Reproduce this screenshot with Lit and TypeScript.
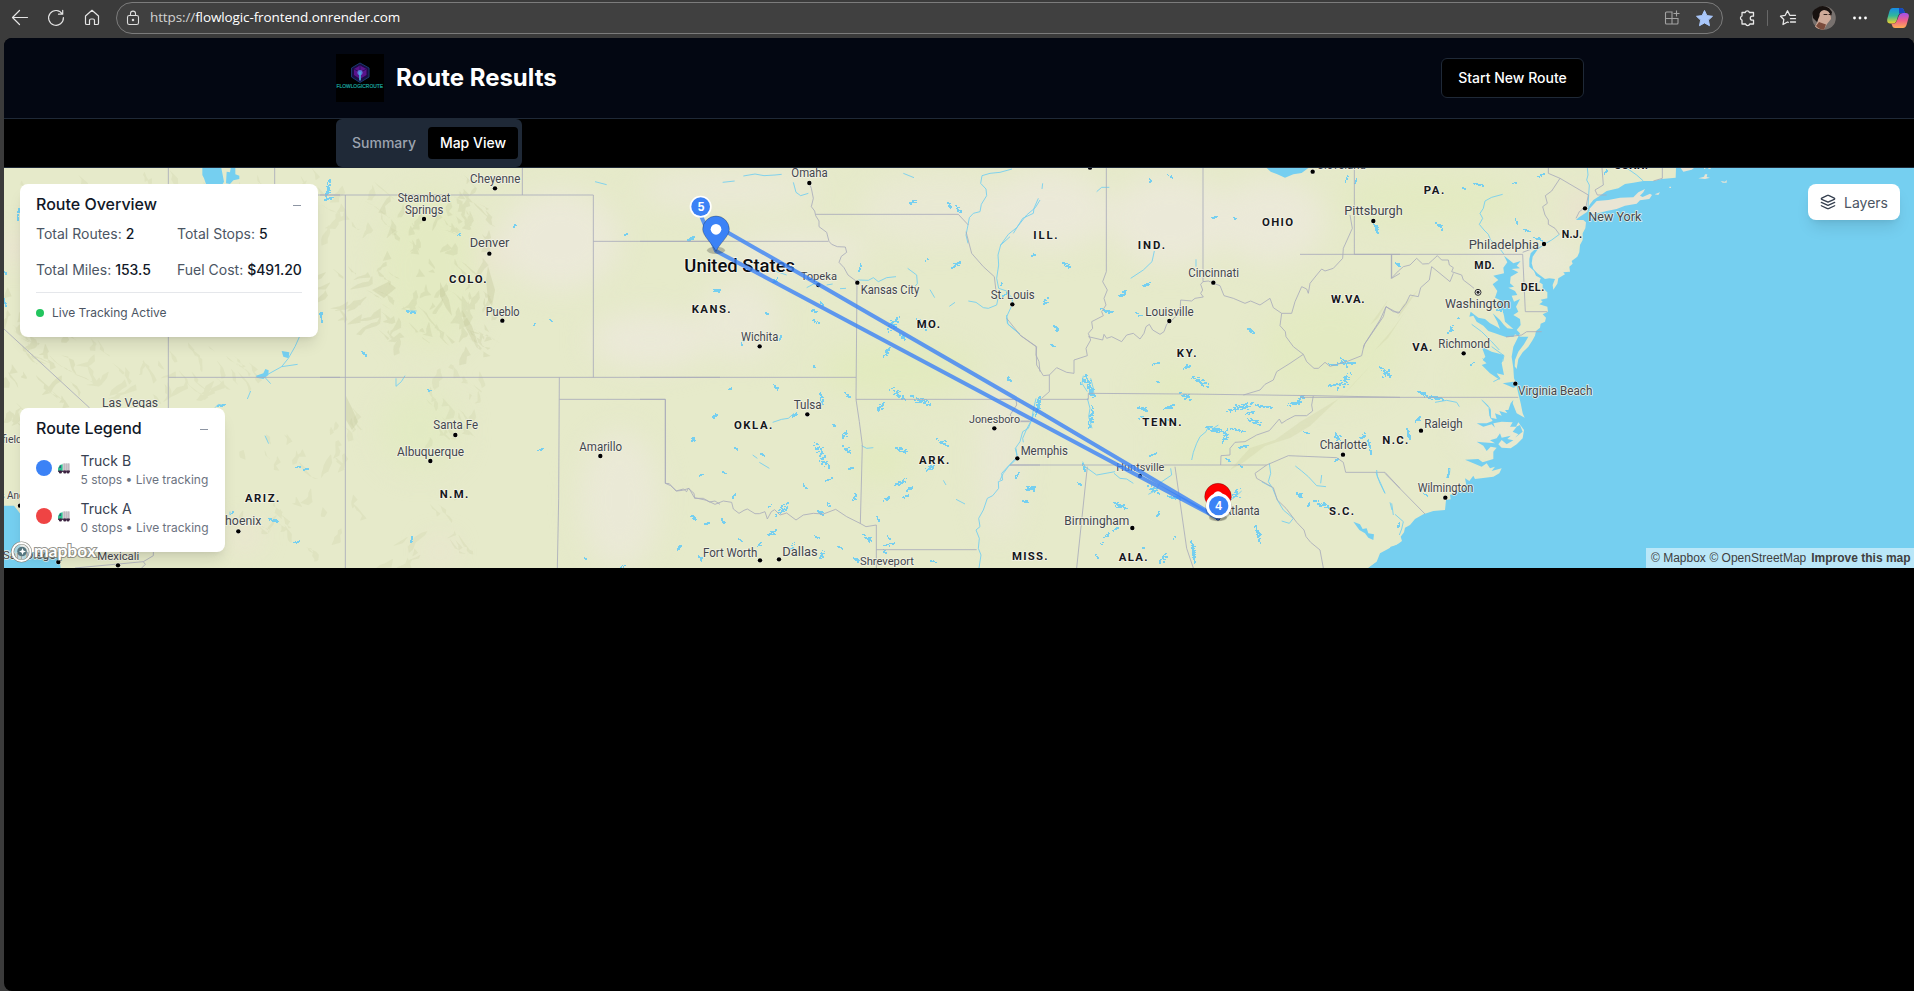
import { LitElement, html, css, svg } from "lit";
import { customElement } from "lit/decorators.js";

type Label = [string, number, number, number, number];
type Box = [number, number, number, number];

interface Sheet {
  ox: number;
  borders: string[];
  rivers: string[];
  water: string[];
  lakes: Box[];
  cities: Label[];
  states: Label[];
  dots: [number, number][];
}

/* Every sheet is drafted at three units per pixel, starting at ox from the left edge. */
const sheets: Sheet[] = [
  {
    ox: 0,
    borders: [
      "M505 9V1000M505 637H1020M824 9V90H1020M12 492L268 728L330 790",
      "M225 1209L430 1190L460 1172V1150M430 1190L436 1198L425 1209",
    ],
    rivers: [
      "M898 516L885 545L865 580L845 605L800 630M845 605L893 598M790 632L812 656",
      "M752 678L742 702M645 728L655 718L675 722M795 812L806 836M690 1040V1050M1005 1060",
    ],
    water: [
      "M607 9H664L672 50L668 57H618L612 40L607 30Z",
      "M680 20L690 22L692 9H706V28L718 32V42L700 46L690 57L678 55Z",
      "M12 1022H42L62 1048L68 1100L90 1130L150 1165L178 1180L182 1209H12Z",
      "M768 632L790 625L796 612L806 616L805 630L790 642L770 638Z",
      "M845 558L868 562L866 580L850 575Z",
    ],
    lakes: [[50, 130, 8, 34], [12, 398, 6, 26], [11, 318, 7, 8], [975, 42, 14, 60], [972, 96, 28, 10], [958, 440, 10, 35], [885, 902, 16, 6], [908, 908, 16, 8], [805, 1058, 30, 14], [880, 1126, 20, 8], [690, 1038, 9, 12], [650, 716, 26, 8]],
    cities: [
      ["Las Vegas", 306, 474, 727, 34],
      ["Bakersfield", -90, 66, 833, 33],
      ["Los Angeles", -35, 128, 1002, 33],
      ["Phoenix", 652, 784, 1080, 34],
      ["San Diego", 8, 168, 1182, 33],
      ["Mexicali", 292, 418, 1184, 33],
    ],
    states: [["ARIZ.", 735, 838, 1010, 31]],
    dots: [[60, 1022], [715, 1099], [175, 1191], [354, 1201]],
  },
  {
    ox: 320,
    borders: [
      "M0 90H820V637M607 9V90M76 90V1209M820 229H1200M0 637H1200",
      "M718 637L716 1000L712 1209M718 703H1036V955L1048 956L1068 978L1090 972L1100 980L1105 970L1122 985L1124 1000H1150L1168 1011L1185 1008L1200 1018",
    ],
    rivers: ["M825 50L860 59", "M228 640V664L244 650L255 632", "M262 438L290 438"],
    water: [],
    lakes: [[580, 178, 8, 8], [410, 203, 14, 12], [258, 434, 30, 12], [640, 474, 8, 8], [688, 463, 8, 8], [124, 558, 14, 14], [322, 672, 10, 8], [650, 850, 20, 7], [1102, 214, 20, 13], [912, 205, 12, 5], [1178, 372, 22, 8], [1177, 745, 12, 14], [1112, 815, 12, 16], [1138, 925, 9, 9], [1112, 1050, 16, 16], [1153, 1070, 14, 8], [1072, 1140, 10, 15], [1133, 1175, 12, 12], [792, 1176, 7, 7], [900, 1200, 15, 8], [271, 1113, 7, 22], [0, 440, 8, 14]],
    cities: [
      ["Cheyenne", 450, 601, 53, 34],
      ["Steamboat", 233, 391, 110, 34],
      ["Springs", 255, 370, 147, 34],
      ["Denver", 449, 568, 247, 37],
      ["Pueblo", 497, 599, 452, 34],
      ["Santa Fe", 340, 474, 793, 34],
      ["Albuquerque", 231, 432, 872, 34],
      ["Amarillo", 778, 906, 858, 34],
    ],
    states: [["COLO.", 387, 500, 353, 31], ["N.M.", 359, 445, 998, 31]],
    dots: [[525, 70], [312, 162], [508, 266], [547, 467], [406, 810], [331, 888], [841, 873]],
  },
  {
    ox: 640,
    borders: [
      "M0 229H565M0 637H648M0 703H76V955L92 962L110 978L128 976L147 970L163 998L200 1006L225 1018L250 1008L275 1012L280 1032L297 1045L312 1036L322 1032L345 1046L358 1046L375 1040L382 1062L394 1040L404 1034L420 1050L440 1044L468 1065L490 1050L520 1045L550 1047L587 1033L620 1055L660 1075L678 1085L709 1080V1209M709 1154H1010",
      "M661 1075L664 960L667 840L658 770L648 703L651 350M648 703H1128",
      "M508 54L514 70L520 100L514 125L524 138L527 152L537 168V185L560 202L567 229L575 238L592 245L616 246L620 262L604 274L597 292L612 308L624 330L640 342L651 350",
      "M527 148H955L985 180M978 200L995 265L1030 305L1063 335L1068 378M1110 900H1200M1128 703L1130 720L1110 750L1130 768H1168",
      "M1140 510L1190 545L1188 570L1197 590L1200 620",
    ],
    rivers: [
      "M1116 12L1080 22L1050 25L1026 32L1022 55L1038 72L1040 92L1024 118L1020 140L1000 145L988 158L984 180L978 210L984 235",
      "M1200 105L1186 128L1160 150L1130 188L1105 208L1082 240L1074 270L1076 300L1070 340L1076 370L1100 378L1117 400L1117 418L1100 455L1104 478L1140 508",
      "M248 52L284 48M310 33L345 27L372 32L405 30L425 28M460 52L468 82L482 92L505 85M655 345L685 346L700 338L715 350L740 338L768 335M803 310L830 330L832 356L825 364M870 374L884 398M928 424L945 412M985 408L1008 412L1030 428L1045 430L1070 420L1074 400M790 25L822 38",
      "M1182 745L1165 790L1148 800L1140 830L1126 850L1132 875L1108 900L1085 925L1088 945L1075 950L1076 970L1058 992L1042 1000L1030 1035L1016 1060L1020 1085L1008 1095L1018 1120L1015 1150L1023 1170L1017 1209",
      "M398 772L425 763L445 760L462 745M665 842L680 850L700 848M338 870L352 880M358 892L388 910M500 368L530 352M560 360L578 357M600 371L618 370M405 318L440 330M918 960L910 946M948 1003L975 1017",
    ],
    water: [],
    lakes: [[142, 215, 20, 11], [218, 372, 22, 8], [395, 337, 18, 17], [375, 440, 11, 11], [418, 510, 5, 14], [302, 525, 10, 14], [512, 432, 20, 10], [515, 463, 25, 12], [540, 408, 10, 12], [519, 600, 7, 8], [400, 657, 16, 18], [263, 667, 12, 8], [612, 682, 18, 18], [538, 682, 14, 38], [455, 740, 16, 20], [217, 747, 14, 10], [153, 815, 12, 15], [283, 846, 10, 8], [360, 865, 14, 8], [247, 916, 11, 11], [178, 927, 10, 8], [275, 985, 12, 14], [520, 832, 35, 45], [530, 870, 38, 40], [603, 795, 18, 25], [605, 840, 28, 25], [577, 778, 8, 6], [625, 905, 14, 6], [554, 937, 22, 12], [488, 955, 12, 18], [635, 985, 14, 22], [558, 1012, 12, 15], [405, 1010, 40, 45], [530, 1035, 20, 14], [150, 1050, 18, 16], [195, 1070, 13, 8], [240, 1058, 16, 18], [380, 1092, 30, 20], [295, 1118, 12, 14], [350, 1130, 14, 16], [114, 1140, 8, 14], [175, 1170, 12, 16], [448, 1132, 16, 25], [523, 1110, 18, 10], [535, 1155, 20, 28], [592, 1142, 16, 10], [665, 1108, 32, 24], [708, 1052, 12, 18], [730, 993, 20, 15], [762, 940, 38, 22], [798, 962, 20, 15], [785, 988, 22, 12], [765, 845, 38, 20], [888, 820, 36, 22], [856, 895, 26, 24], [705, 710, 28, 32], [748, 665, 38, 40], [785, 690, 12, 14], [810, 690, 62, 30], [730, 545, 22, 32], [740, 452, 40, 48], [778, 505, 16, 24], [828, 460, 34, 34], [808, 103, 24, 13], [922, 112, 14, 18], [945, 120, 18, 25], [932, 287, 32, 22], [655, 293, 10, 25], [856, 278, 8, 12], [1098, 632, 10, 14], [1185, 692, 14, 60], [1172, 263, 12, 14], [1125, 925, 12, 15], [1158, 960, 28, 20], [1145, 1004, 20, 8], [740, 1110, 10, 12], [728, 1132, 38, 12], [728, 1152, 12, 14], [870, 1185, 20, 8], [640, 1172, 18, 18], [1085, 380, 26, 12], [385, 1018, 10, 10]],
    cities: [
      ["Omaha", 454, 563, 37, 34],
      ["Topeka", 482, 591, 344, 33],
      ["Kansas City", 662, 838, 388, 34],
      ["St. Louis", 1052, 1184, 401, 34],
      ["Wichita", 303, 415, 527, 34],
      ["Tulsa", 461, 545, 731, 34],
      ["Jonesboro", 987, 1140, 775, 33],
      ["Fort Worth", 189, 352, 1176, 34],
      ["Dallas", 427, 533, 1172, 36],
      ["Shreveport", 660, 822, 1200, 33],
    ],
    states: [["KANS.", 155, 272, 443, 31], ["MO.", 830, 900, 489, 31], ["OKLA.", 282, 397, 793, 31], ["ARK.", 837, 928, 898, 31]],
    dots: [[508, 54], [535, 360], [652, 353], [1117, 418], [359, 544], [502, 748], [1063, 790], [360, 1186], [417, 1183]],
  },
  {
    ox: 1000,
    borders: [
      "M319 9V320L308 350L322 375L312 400L318 420L305 440L310 452L275 470L278 490L265 505L272 525L258 550L262 572L222 585L222 625L200 622L170 608L148 630",
      "M20 460L62 512L108 545L110 600L130 632L148 630L148 680L125 700",
      "M265 515L308 525L312 508L320 520L335 515L365 530L380 510L400 505L420 522L432 505L438 485L448 478L458 495L480 508L492 500L500 478L522 460L540 440L542 405L575 408L585 400L610 396L602 385L608 375L602 358L609 350L625 348L640 355L660 362L672 392L700 400L735 415L752 408L780 420L810 400L820 428L845 445L875 445L885 410L905 365L920 372L925 385L930 355L950 330L965 312L975 318L1000 310L1028 280L1030 250L1057 190L1050 150",
      "M609 9V350M1063 9V268H1200M1175 268V340L1200 325",
      "M845 445L840 482L856 500L858 515L880 545L910 568L920 590L942 610H955L975 592L990 604L1040 590L1085 572L1092 540L1150 455L1158 425L1180 440L1200 442",
      "M910 568L870 595L830 620L820 645L795 658L780 675L730 690M120 703H265V685L560 687L940 692L1200 697",
      "M940 692L935 720L938 738L920 752L885 752L860 765L845 775L838 762L808 797L770 810L735 830L705 832L690 850V870L663 872L662 900M30 900H800L865 872L1010 878L1030 892L1037 922H1155L1200 970",
      "M800 900L765 925L770 940L820 968L832 1005L858 1030L890 1072L912 1095L918 1115L932 1132L960 1155L970 1209M262 905L230 1209M525 905L560 1150L580 1209M0 703H40M60 770H90",
    ],
    rivers: [
      "M115 100L102 130L100 145L68 160L40 205M30 215L0 242M128 55L126 72M290 80L305 67H328M463 258L456 290L430 315L392 340M588 283V305M20 450L22 475L60 508M108 700L100 735L95 765L80 792L68 820L70 832M48 850L52 880L25 905L10 925L0 945",
      "M575 885L580 862L590 835L600 815L618 800L625 785L640 790L655 780M512 910L515 930L478 955L470 975L445 988",
      "M808 895L812 925L805 950L818 970L832 1005L850 1035L880 1060L868 1075L845 1068M785 950L812 965M886 903L905 918L925 935L950 962L978 965M965 930L962 955M1128 922L1140 955L1155 985M1175 1015L1180 1050M342 925L360 940L380 942L400 955M248 890L255 905L290 930L345 920M650 985L700 1000L725 978",
      "M262 700L270 730L266 755L276 790M250 632L246 655L262 680M272 640L280 670L282 692",
    ],
    water: [
      "M800 9H925L905 24L880 28L855 38L832 28L812 20Z",
      "M1105 1209L1130 1190L1140 1165L1168 1150L1200 1135V1209Z",
      "M1060 1070L1080 1078L1088 1092L1100 1090L1105 1105L1122 1108L1120 1125L1105 1118L1095 1105L1078 1095Z",
    ],
    lakes: [[240, 630, 20, 30], [255, 628, 20, 64], [262, 660, 22, 40], [264, 720, 16, 70], [632, 152, 18, 8], [700, 156, 12, 7], [92, 265, 12, 10], [187, 290, 24, 20], [128, 397, 16, 20], [425, 352, 24, 14], [355, 385, 20, 9], [365, 376, 14, 4], [405, 442, 20, 12], [300, 430, 40, 14], [160, 480, 16, 20], [150, 538, 16, 8], [20, 635, 12, 12], [740, 488, 22, 20], [455, 590, 22, 9], [550, 596, 20, 16], [572, 632, 54, 34], [468, 647, 12, 8], [538, 680, 36, 26], [490, 715, 32, 20], [412, 722, 32, 16], [415, 752, 14, 12], [502, 762, 22, 14], [678, 710, 84, 30], [765, 718, 50, 12], [742, 758, 40, 22], [735, 738, 28, 12], [615, 782, 60, 22], [665, 790, 20, 44], [690, 788, 44, 12], [715, 840, 30, 9], [675, 878, 16, 14], [448, 862, 24, 11], [714, 895, 12, 12], [860, 705, 44, 18], [910, 798, 18, 9], [895, 685, 20, 18], [985, 590, 80, 10], [1020, 575, 20, 30], [1010, 620, 45, 54], [985, 655, 35, 8], [1142, 605, 30, 32], [1078, 802, 20, 20], [1000, 800, 28, 34], [1102, 822, 12, 48], [1003, 878, 14, 12], [245, 895, 10, 24], [232, 950, 12, 10], [75, 962, 34, 14], [65, 1005, 22, 8], [44, 922, 12, 16], [338, 1012, 44, 20], [468, 1038, 11, 18], [518, 1114, 10, 10], [310, 1100, 16, 20], [300, 1130, 10, 10], [478, 1165, 26, 30], [570, 1125, 16, 70], [762, 1080, 22, 54], [425, 1145, 8, 8], [285, 1168, 8, 10], [888, 980, 18, 20], [940, 1005, 46, 24], [920, 1010, 10, 12], [502, 990, 40, 14], [440, 960, 40, 28], [502, 28, 16, 10], [446, 38, 6, 12], [336, 1085, 18, 12], [1185, 290, 15, 16], [0, 352, 8, 12], [1035, 30, 8, 20], [1063, 40, 8, 18], [1120, 170, 14, 34], [690, 970, 34, 36], [1190, 1070, 10, 20]],
    cities: [
      ["Cleveland", 950, 1098, 12, 34],
      ["Pittsburgh", 1033, 1208, 150, 37],
      ["Cincinnati", 565, 717, 336, 34],
      ["Louisville", 436, 581, 452, 34],
      ["Memphis", 62, 204, 870, 34],
      ["Huntsville", 349, 493, 918, 33],
      ["Charlotte", 959, 1102, 852, 34],
      ["Atlanta", 672, 779, 1049, 35],
      ["Birmingham", 193, 388, 1080, 34],
    ],
    states: [
      ["ILL.", 100, 173, 221, 31], ["IND.", 413, 495, 252, 31], ["OHIO", 786, 879, 183, 31],
      ["W.VA.", 993, 1094, 414, 31], ["KY.", 530, 590, 577, 31], ["TENN.", 427, 545, 782, 31],
      ["S.C.", 987, 1062, 1049, 31], ["MISS.", 36, 143, 1184, 31], ["ALA.", 356, 443, 1188, 31],
    ],
    dots: [[270, 8], [938, 20], [1120, 168], [640, 353], [508, 468], [52, 880], [420, 933], [1029, 869], [397, 1089], [654, 1060]],
  },
];

const coast =
  "M1128 9L1127 38L1085 42L1062 48H1030L1000 53L975 57L955 70L920 78L895 95L880 105L870 118L864 130L862 140L835 158L828 165L850 165L858 172L856 190L848 205L848 225L840 240L838 262L832 275L815 288L818 296L808 305L810 320L790 322L795 328L775 340L772 356L760 374L758 360L765 342L748 340L735 342L722 332L712 325L700 312L695 295L698 275L712 255L732 240L708 250L692 265L688 282V305L702 318L708 332L722 340L718 352L728 358L728 370L742 382V400L722 404L728 410L718 418L742 425L744 440L728 448L738 458L735 470L722 476L720 488L708 498L705 512L698 525L685 545L668 562L655 582L650 612L644 604L645 585L655 560L672 538L685 515L662 515L645 508L640 516L618 516L600 510L585 505L565 498L550 482L530 470L520 452L508 455L512 440L535 458L555 462L570 475L590 485L600 492L592 470L578 445L600 465L612 480L622 490L640 492L615 470L612 452L605 425L588 418L600 405L585 398L592 378L578 358L595 345L580 332L612 325L610 308L622 292L612 272L628 285L640 295L662 288L650 302L660 310L635 312L655 322L632 335L630 355L642 365L625 368L645 378L652 390L635 392L642 410L660 402L648 425L655 440L640 450L660 462L662 480L650 495L660 505L640 545L635 575L640 610L642 640L648 655L656 690L662 715L668 745L674 758L650 745L638 715L640 705L632 715L625 735L615 735L622 745L598 738L605 752L585 745L590 762L572 758V735L545 703L565 722L568 752L578 768L560 775H530L550 785L575 778L585 788L580 775L605 770L638 772L630 785H650L638 800L655 808L645 818L668 800L660 780L648 785L655 772L672 795L668 820L650 838L632 850L605 848L595 838L605 825L620 838L640 826L622 822L632 812L605 818L600 805L590 820L570 826L585 835L545 832L530 830L550 842L560 858L572 845L590 848L580 860V882L548 892L535 882L495 884L520 895L545 905L560 895L570 910L585 905L575 918L605 910L598 925L580 935L525 942L520 932L508 948L495 940L500 965L475 978L450 990L452 1003L438 1005L435 1035L400 1038L370 1048L345 1062L330 1080L315 1088L312 1102L302 1115L306 1128L290 1140L272 1145L262 1160L245 1170L240 1185L225 1195L205 1209H1842V9Z";

const east: Sheet = {
  ox: 1300,
  borders: [
    "M274 268V340L295 318L310 305L330 300L350 280L368 297L386 296L398 285L412 272L425 285L445 285L448 300L460 308L455 320L485 330L490 345L510 360L522 370M460 325L450 350L395 305L388 345L362 368L355 395L330 390L318 415L295 445L258 425L240 465L195 535L190 550",
    "M0 268H668L676 440H742M668 262L700 250M778 208L765 190L745 178V165L735 150L728 125L742 115L736 92L755 78L780 40L745 25V9M780 40L865 90L858 125L838 140L828 160M618 516L665 510L680 500L725 500M0 697H655M255 925L375 1047M906 9L910 60L885 75L892 90H920M1087 9V40L1060 48",
  ],
  rivers: [
    "M862 9L864 30L860 45L868 60L866 90L864 128M608 88L575 97L555 108L550 130L540 145L548 160L538 178L552 195L565 208L572 225L595 245L612 268M778 208L755 225L732 238M515 478L545 500L575 530L598 555M575 545L612 572L608 590M548 580L575 610L600 640L580 650M545 705L570 730L572 760M230 915L232 935L242 955L255 985M270 1012L276 1035M285 1048L310 1070L305 1092L298 1110M450 910L448 930L438 938M980 9L1010 30L1030 48M405 712L440 706L470 712L478 725",
  ],
  water: ["M545 545L575 560L612 570L605 595L612 630L590 625L600 645L570 625L545 600L560 595L548 585L556 575Z", "M608 655L640 650L648 665L640 668Z"],
  lakes: [[487, 66, 12, 6], [520, 54, 30, 9], [635, 50, 14, 8], [645, 160, 8, 16], [405, 170, 24, 24], [670, 190, 20, 10], [712, 25, 20, 12], [285, 290, 14, 12], [442, 480, 18, 26], [470, 455, 8, 8], [510, 592, 12, 8], [236, 604, 8, 6], [245, 612, 26, 28], [352, 676, 28, 16], [368, 686, 60, 22], [345, 752, 18, 20], [316, 790, 15, 34], [440, 908, 8, 30], [370, 985, 14, 8], [912, 12, 8, 16], [700, 215, 30, 12], [580, 415, 34, 30], [600, 380, 20, 30]],
  cities: [
    ["Philadelphia", 506, 717, 251, 38],
    ["New York", 865, 1024, 167, 37],
    ["Washington", 435, 631, 428, 37],
    ["Richmond", 415, 570, 548, 34],
    ["Virginia Beach", 654, 877, 690, 34],
    ["Raleigh", 373, 488, 788, 34],
    ["Wilmington", 353, 520, 982, 34],
  ],
  states: [
    ["PA.", 371, 433, 88, 31], ["N.J.", 785, 846, 219, 29], ["MD.", 523, 584, 311, 29], ["DEL.", 662, 733, 378, 29],
    ["VA.", 337, 397, 557, 31], ["N.C.", 247, 325, 838, 31], ["CONN.", 942, 1044, 12, 31],
  ],
  dots: [[732, 237], [855, 130], [491, 565], [646, 656], [363, 797], [436, 998]],
};

const islands =
  "M868 132L890 108L925 105L960 98L1000 97L1015 82L1035 72L1030 82L1020 92L1028 96L1050 86L1056 90L1048 102L1020 106L1010 116L975 122L950 132L920 138L888 146L870 148Z M1064 88L1080 82L1075 90Z M1195 40L1212 35L1215 28H1222L1220 36L1230 38L1215 42Z M1262 48L1275 50L1280 45V53H1268Z M1142 9H1182L1175 14L1150 20Z M1212 9H1216V12H1212Z M1225 9H1232V12H1225Z M1108 65H1113V69H1108Z";

/* Rows of small squares wander diagonally through the box, like a reservoir seen from far off. */
function reservoir([x, y, w, h]: Box): string {
  let seed = (x * 73 + y * 151 + w * 17) % 9973;
  const rnd = () => {
    seed = (seed * 421 + 1663) % 9973;
    return seed / 9973;
  };
  const n = Math.max(4, Math.round(Math.max(w, h) / 3));
  const rising = rnd() > 0.45;
  let d = "";
  for (let i = 0; i < n; i++) {
    const t = i / (n - 1);
    const major = w >= h;
    const spread = (rnd() - 0.5) * 0.65;
    const tx = major ? t : Math.min(1, Math.max(0, (rising ? 1 - t : t) + spread));
    const ty = major ? Math.min(1, Math.max(0, (rising ? 1 - t : t) + spread)) : t;
    const px = Math.round((x + tx * Math.max(0, w - 3)) / 3) * 3;
    const py = Math.round((y + ty * Math.max(0, h - 3)) / 3) * 3;
    const rw = rnd() > 0.45 ? 6 : 3;
    const rh = rnd() > 0.5 ? 6 : 3;
    d += `M${px} ${py}h${rw}v${rh}h-${rw}z`;
    if (Math.min(w, h) > 12) {
      const qx = Math.round((x + (w * 0.5 + (tx * w - w * 0.5) * 0.5)) / 3) * 3;
      const qy = Math.round((y + (h * 0.5 + (rnd() - 0.5) * h * 0.5)) / 3) * 3;
      d += `M${qx} ${qy}h6v3h-6z`;
    }
  }
  return d;
}

function relief(x0: number, y0: number, x1: number, y1: number, count: number, lean: number, seed0: number): string {
  let seed = seed0;
  const rnd = () => {
    seed = (seed * 421 + 1663) % 9973;
    return seed / 9973;
  };
  let d = "";
  for (let i = 0; i < count; i++) {
    let x = x0 + rnd() * (x1 - x0);
    let y = y0 + rnd() * (y1 - y0);
    const side = rnd() > 0.5 ? 1 : -0.6;
    const top: string[] = [];
    const back: string[] = [];
    const steps = 2 + Math.floor(rnd() * 4);
    for (let k = 0; k <= steps; k++) {
      const thick = k === 0 || k === steps ? 0.5 : 2 + rnd() * 5;
      top.push(`${x.toFixed(1)} ${y.toFixed(1)}`);
      back.unshift(`${(x + thick).toFixed(1)} ${(y + thick * 0.6).toFixed(1)}`);
      x += (lean * 4 + (rnd() - 0.5) * 9) * side;
      y += 1 + rnd() * 5;
    }
    d += `M${top.join("L")}L${back.join("L")}Z`;
  }
  return d;
}

@customElement("route-map")
class RouteMap extends LitElement {
  static styles = css`
    :host { display: block; }
    svg { display: block; width: 100%; height: 100%; }
    text { font-family: "Roboto", "Liberation Sans", sans-serif; }
    .border { fill: none; stroke: #a9abbb; stroke-width: 2.8; stroke-opacity: .9; }
    .river { fill: none; stroke: #75cff0; stroke-width: 3; stroke-opacity: .9; }
    .water { fill: #75cff0; }
    .city { fill: #43464c; paint-order: stroke; stroke: #f4f4e8; stroke-opacity: .85; stroke-width: 5; stroke-linejoin: round; }
    .state { fill: #17181c; font-weight: 700; paint-order: stroke; stroke: #f7f7ee; stroke-opacity: .85; stroke-width: 5; stroke-linejoin: round; }
    .country { fill: #0c0d10; font-weight: 500; paint-order: stroke; stroke: #f7f7ee; stroke-width: 5; }
    .dot { fill: #000; stroke: #fff; stroke-width: 3; stroke-opacity: .7; paint-order: stroke; }
    .line { fill: none; stroke: #3b82f6; stroke-opacity: .8; stroke-width: 12; stroke-linejoin: round; stroke-linecap: round; }
    .num { fill: #fff; font-family: "Liberation Sans", sans-serif; font-weight: 700; font-size: 36px; text-anchor: middle; }
    .soft { filter: blur(14px); }
    .ridge { filter: blur(.7px); }
  `;

  private terrain(s: Sheet) {
    return svg`<g transform="translate(${s.ox} 165) scale(.33333333)">
      ${s.rivers.map((d) => svg`<path class="river" d=${d}></path>`)}
      ${s.water.map((d) => svg`<path class="water" d=${d}></path>`)}
      <path class="water" shape-rendering="crispEdges" d=${s.lakes.map(reservoir).join("")}></path>
      ${s.borders.map((d) => svg`<path class="border" d=${d}></path>`)}
    </g>`;
  }

  private names(s: Sheet) {
    return svg`<g transform="translate(${s.ox} 165) scale(.33333333)">
      ${s.cities.map(([t, a, b, y, size]) => svg`<text class="city" x=${a} y=${y} font-size=${size * 1.06} textLength=${b - a} lengthAdjust="spacingAndGlyphs">${t}</text>`)}
      ${s.states.map(([t, a, b, y, size]) => svg`<text class="state" x=${a} y=${y} font-size=${size * 1.1} textLength=${b - a}>${t}</text>`)}
      ${s.dots.map(([x, y]) => svg`<circle class="dot" cx=${x} cy=${y} r="6.6"></circle>`)}
    </g>`;
  }

  private pin(x: number, y: number, color: string, hole: boolean) {
    return svg`<g transform="translate(${x} ${y})">
      <ellipse cx="0" cy="-3" rx="27" ry="11" fill="#000" opacity=".22"></ellipse>
      <path d="M0 0C-10 -22 -40 -46 -40 -66A40 40 0 0 1 40 -66C40 -46 10 -22 0 0Z" fill=${color} stroke="#000" stroke-opacity=".25" stroke-width="3"></path>
      ${hole ? svg`<circle cx="0" cy="-66" r="16" fill="#fff"></circle>` : ""}
    </g>`;
  }

  render() {
    return html`<svg viewBox="4 168 1910 400" preserveAspectRatio="none">
      <rect x="4" y="168" width="1910" height="400" fill="#e6eaca"></rect>
      <g class="soft">
        <ellipse cx="560" cy="240" rx="60" ry="50" fill="#ebe9d8"></ellipse>
        <ellipse cx="650" cy="340" rx="60" ry="28" fill="#ebe9d8"></ellipse>
        <ellipse cx="620" cy="500" rx="40" ry="70" fill="#eae9d6"></ellipse>
        <ellipse cx="800" cy="250" rx="70" ry="22" fill="#eae9d6"></ellipse>
        <ellipse cx="740" cy="320" rx="40" ry="40" fill="#eae9d6"></ellipse>
        <ellipse cx="730" cy="190" rx="90" ry="20" fill="#eae9d6"></ellipse>
        <ellipse cx="940" cy="210" rx="80" ry="36" fill="#e9e9d3"></ellipse>
        <ellipse cx="1050" cy="210" rx="60" ry="40" fill="#ebe9d8"></ellipse>
        <ellipse cx="1170" cy="220" rx="60" ry="46" fill="#ebe9d8"></ellipse>
        <ellipse cx="1270" cy="220" rx="55" ry="42" fill="#ebe9d8"></ellipse>
        <ellipse cx="1000" cy="460" rx="20" ry="80" fill="#e9e8d4"></ellipse>
        <ellipse cx="1530" cy="260" rx="50" ry="22" fill="#e9e9d5"></ellipse>
        <ellipse cx="1500" cy="430" rx="40" ry="20" fill="#e9e9d3"></ellipse>
        <ellipse cx="900" cy="370" rx="80" ry="28" fill="#e2eabf"></ellipse>
        <ellipse cx="880" cy="460" rx="30" ry="22" fill="#e2eabf"></ellipse>
        <ellipse cx="1330" cy="350" rx="70" ry="50" fill="#e3eac2"></ellipse>
        <ellipse cx="1430" cy="200" rx="90" ry="26" fill="#e3eac2"></ellipse>
        <ellipse cx="1180" cy="390" rx="40" ry="24" fill="#e3eac2"></ellipse>
        <ellipse cx="1220" cy="450" rx="60" ry="20" fill="#e3eac2"></ellipse>
        <ellipse cx="1520" cy="380" rx="60" ry="20" fill="#e3eac2"></ellipse>
        <ellipse cx="430" cy="270" rx="50" ry="80" fill="#e3eac2"></ellipse>
        <ellipse cx="420" cy="430" rx="40" ry="40" fill="#e2eac3"></ellipse>
        <ellipse cx="1580" cy="208" rx="12" ry="14" fill="#eddcd4"></ellipse>
        <ellipse cx="1506" cy="384" rx="12" ry="6" fill="#f3e2dc"></ellipse>
        <ellipse cx="492" cy="256" rx="10" ry="11" fill="#f1e0da"></ellipse>
        <ellipse cx="440" cy="552" rx="10" ry="9" fill="#f1e0da"></ellipse>
        <ellipse cx="245" cy="536" rx="12" ry="9" fill="#f1e0da"></ellipse>
        <ellipse cx="14" cy="248" rx="12" ry="12" fill="#f1e0da"></ellipse>
      </g>
      <g class="ridge">
        <path fill="#bcc192" fill-opacity=".24" d=${relief(385, 195, 490, 350, 75, 0.7, 77) + relief(325, 250, 395, 330, 24, -1.3, 915) + relief(4, 255, 70, 415, 60, 0.9, 400) + relief(450, 170, 470, 240, 12, 0.3, 31)}></path>
        <path fill="#bcc192" fill-opacity=".3" d="M440 282L449 300L452 316L446 308L440 296ZM462 310L472 326L478 344L472 340L464 324ZM488 266L495 290L492 306L488 300L486 280ZM372 290L388 282L396 288L384 298ZM346 396L352 408L358 422L352 430L346 420Z"></path>
        <path fill="#c3c79a" fill-opacity=".2" d=${relief(85, 338, 165, 405, 16, -0.8, 600) + relief(165, 340, 250, 385, 20, -1, 123) + relief(330, 400, 356, 560, 12, 0.5, 44) + relief(425, 360, 480, 440, 26, 0.3, 88) + relief(390, 480, 480, 560, 14, -0.9, 812) + relief(240, 430, 330, 560, 22, 0.8, 511) + relief(4, 168, 330, 190, 24, -0.6, 21) + relief(320, 180, 385, 230, 12, 0.9, 55)}></path>
        <path d="M1230 470L1250 448L1275 440L1300 422L1340 398L1372 364L1352 386L1310 426L1290 438L1265 446L1244 462Z M1375 350L1392 330L1405 312L1388 338Z M1398 318L1418 290L1402 306Z M1370 325L1388 300L1378 318Z" fill="#c6ca9b" fill-opacity=".25"></path>
      </g>
      ${sheets.map((s) => this.terrain(s))}
      <g transform="translate(1300 165) scale(.33333333)">
        <path class="water" d=${coast} fill-rule="evenodd"></path>
        <path d=${islands} fill="#e9e5d4"></path>
      </g>
      ${this.terrain(east)}
      ${sheets.map((s) => this.names(s))}
      ${this.names(east)}
      <g transform="translate(640 165) scale(.33333333)">
        <text class="country" x="133" y="320" font-size="57" textLength="332" lengthAdjust="spacingAndGlyphs">United States</text>
        <path class="line" d="M182 150L228 258L1734 1060"></path>
        <path class="line" d="M228 182L535 358L1200 742L1734 1058"></path>
        ${this.pin(228, 259, "#3b82f6", true)}
        <circle cx="182" cy="125" r="33" fill="#fff"></circle>
        <circle cx="182" cy="125" r="28" fill="#3b82f6"></circle>
        <text class="num" x="183" y="138">5</text>
        ${this.pin(1734, 1061, "#ff0000", true)}
        <circle cx="1736" cy="1027" r="40" fill="#000" opacity=".18"></circle>
        <circle cx="1736" cy="1022" r="38" fill="#fff"></circle>
        <circle cx="1736" cy="1022" r="29" fill="#3b82f6"></circle>
        <text class="num" x="1736" y="1034">4</text>
      </g>
      <g transform="translate(1300 165) scale(.33333333)">
        <circle cx="534" cy="382" r="9" fill="#eee" stroke="#333" stroke-width="3"></circle>
        <circle cx="534" cy="382" r="4.5" fill="#222"></circle>
      </g>
    </svg>`;
  }
}

const truck = svg`<svg class="truck" viewBox="0 0 12 11">
  <rect x="4.6" y="0.4" width="7.2" height="7.8" fill="#cfc9cf"></rect>
  <path d="M6.5 .4V8M8.6 .4V8M10.5 .4V8" stroke="#b5acb6" stroke-width=".6"></path>
  <path d="M0 5.2L1.8 2L4.6 1.2V8.2H0Z" fill="#2fbf8f"></path>
  <path d="M.8 5L2.2 2.6L3 2.5V5Z" fill="#3a5a80"></path>
  <rect x="0" y="7.6" width="12" height="1.3" fill="#4b3350"></rect>
  <circle cx="2.4" cy="9" r="1.6" fill="#3c2341"></circle><circle cx="6.8" cy="9" r="1.6" fill="#3c2341"></circle><circle cx="10" cy="9" r="1.6" fill="#3c2341"></circle>
</svg>`;

@customElement("app-root")
class AppRoot extends LitElement {
  static styles = css`
    :host { display: block; width: 1914px; height: 991px; background: #3b3b3b; overflow: hidden; font-family: "Inter", sans-serif; }
    * { box-sizing: border-box; }
    svg { display: block; flex: none; }
    .chrome { height: 38px; display: flex; align-items: flex-start; padding: 2px 0 0 0; }
    .nav { width: 116px; height: 32px; flex: none; }
    .address { width: 1607px; height: 32px; flex: none; border: 1px solid #7c7c7c; border-radius: 17px; background: #404040; display: flex; align-items: center; padding-left: 9px; }
    .url { margin-left: 10px; margin-top: -2px; font: 13.5px/20px "Open Sans", "Noto Sans", sans-serif; letter-spacing: -.11px; color: #fff; white-space: nowrap; width: 1261px; }
    .scheme { color: #d2d2d2; }
    .star { margin-left: 3px; }
    .tools { width: 191px; height: 32px; flex: none; }
    .page { margin-left: 4px; height: 953px; background: #000; border-radius: 8px 8px 0 8px; overflow: hidden; display: flex; flex-direction: column; }
    .header { height: 81px; flex: none; background: #030712; border-bottom: 1px solid #1f2937; padding-left: 332px; }
    .bar { width: 1248px; height: 80px; display: flex; align-items: center; }
    .title { margin: 0 auto 0 12px; font-size: 24px; line-height: 32px; font-weight: 700; color: #fff; letter-spacing: 0; }
    .start { width: 143px; height: 40px; border: 1px solid #1f2937; border-radius: 6px; background: #000; color: #fff; font: 500 14px/20px "Inter", sans-serif; padding: 0; }
    .tabs { height: 49px; flex: none; padding-left: 332px; border-bottom: 1px solid #1f2937; }
    .list { width: 186px; height: 48px; border-radius: 6px; background: #1f2937; padding: 0 4px; display: flex; align-items: center; }
    .tab { height: 32px; border-radius: 4px; font-size: 14px; line-height: 32px; font-weight: 500; color: #9ca3af; padding: 0 12px; white-space: nowrap; }
    .tab.on { background: #000; color: #fff; width: 90px; text-align: center; padding: 0; }
    .stage { position: relative; height: 400px; flex: none; overflow: hidden; }
    .canvas { height: 400px; }
    .card { position: absolute; left: 16px; background: #fff; border-radius: 8px; padding: 8px 16px 16px; box-shadow: 0 10px 15px -3px rgba(0,0,0,.1), 0 4px 6px -4px rgba(0,0,0,.1); color: #111827; white-space: nowrap; }
    .overview { top: 16px; width: 298px; height: 153px; }
    .legend { top: 240px; width: 205px; height: 144px; }
    .head { display: flex; justify-content: space-between; align-items: center; font-size: 16px; line-height: 24px; font-weight: 500; }
    .fold { width: 8px; height: 1px; background: #8d95a3; margin-right: 1px; margin-top: 2px; }
    .stats { margin-top: 8px; display: grid; grid-template-columns: 125px 125px; gap: 16px; font-size: 14px; line-height: 20px; color: #4b5563; }
    .stats b { font-weight: 500; color: #111827; }
    .live { margin-top: 12px; border-top: 1px solid #e5e7eb; padding-top: 12px; display: flex; align-items: center; gap: 8px; font-size: 12px; line-height: 16px; color: #4b5563; }
    .pulse { width: 8px; height: 8px; border-radius: 50%; background: #22c55e; }
    .trucks { margin-top: 11px; display: flex; flex-direction: column; gap: 12px; }
    .row { display: flex; align-items: flex-start; height: 36px; }
    .swatch { width: 16px; height: 16px; border-radius: 50%; background: #3b82f6; margin: 9px 6px 0 0; }
    .swatch.red { background: #ef4444; }
    .truck { width: 12px; height: 11px; margin: 12px 11px 0 0; }
    .name { margin-left: -.5px; font-size: 14px; line-height: 20px; color: #374151; }
    .sub { margin: 1px 0 0 -.5px; font-size: 12px; line-height: 16px; color: #6b7280; }
    .layers { position: absolute; right: 14px; top: 16px; width: 92px; height: 36px; border-radius: 8px; background: #fff; box-shadow: 0 10px 15px -3px rgba(0,0,0,.1), 0 4px 6px -4px rgba(0,0,0,.1); display: flex; align-items: center; gap: 8px; padding-left: 12px; font-size: 14px; color: #4b5563; }
    .credit { position: absolute; right: 0; bottom: 0; width: 268px; height: 20px; background: rgba(255,255,255,.5); font: 12px/20px "Liberation Sans", sans-serif; color: #404040; padding-left: 5px; white-space: nowrap; display: flex; }
    .credit span + span { margin-left: 3.5px; }
    .credit b { margin-left: 5px; }
    .mark { position: absolute; left: 6px; bottom: 5px; width: 92px; height: 24px; }
    .mark text { font: 700 16.5px "Lato", sans-serif; fill: #fff; stroke: #77786f; stroke-opacity: .8; stroke-width: 2; paint-order: stroke; }
    .brand { font: 5.6px "Liberation Sans", sans-serif; fill: #1ba8a0; stroke: #1ba8a0; stroke-width: .2; }
  `;

  render() {
    return html`
      <div class="chrome">
        <svg class="nav" viewBox="0 2 116 32" fill="none" stroke="#e4e4e4" stroke-width="1.2" stroke-linecap="round" stroke-linejoin="round">
          <path d="M27.5 17.5H12.5M19.5 10.5L12.5 17.5L19.5 24.5"></path>
          <path d="M62.300 14A7.400 7.400 0 1 0 63.400 17.500M62.700 10.300V14.200H58.500"></path>
          <path d="M85.500 16L92 10.300L98.500 16V23.200A1.300 1.300 0 0 1 97.200 24.500H94.500V20.500A1.500 1.500 0 0 0 93 19H91A1.500 1.500 0 0 0 89.500 20.500V24.500H86.800A1.300 1.300 0 0 1 85.500 23.200Z"></path>
        </svg>
        <div class="address">
          <svg width="14" height="16" viewBox="0 0 14 16" fill="none" stroke="#dedede" stroke-width="1.1">
            <rect x="1.500" y="5.500" width="11" height="9" rx="1.800"></rect><path d="M4.500 5.500V3.600a2.500 2.500 0 0 1 5 0V5.500"></path><circle cx="7" cy="10" r=".7" fill="#dedede"></circle>
          </svg>
          <div class="url"><span class="scheme">https://</span>flowlogic-frontend.onrender.com</div>
          <svg width="280" height="30" viewBox="1411 3 280 30">
            <g fill="none" stroke="#a3a3a3" stroke-width="1.100"><path d="M1672 12H1666.500a1 1 0 0 0-1 1V23a1 1 0 0 0 1 1H1677a1 1 0 0 0 1-1V18.500H1665.500M1672 11.500V24.500M1676.500 10.500V16.500M1673.500 13.500H1679.500"></path></g>
          </svg>
          <svg class="star" width="20" height="20" viewBox="0 0 20 20"><path d="M13 2L15.400 7.100L21 7.800L16.900 11.600L18 17.200L13 14.400L8 17.200L9.100 11.600L5 7.800L10.600 7.100Z" transform="translate(-2.500 .5)" fill="#a9c7fa" stroke="#a9c7fa" stroke-linejoin="round"></path></svg>
        </div>
        <svg class="tools" viewBox="1723 2 191 32" fill="none" stroke="#e8e8e8" stroke-width="1.300" stroke-linejoin="round" stroke-linecap="round">
          <path d="M1742 12.500H1745.200A2.200 2.200 0 0 1 1749.400 12.500H1753.500V16.200H1752.300A2 2 0 0 0 1752.300 20.200H1753.500V24H1749.800A2.200 2.200 0 0 1 1745.600 24H1742V20.200A2.200 2.200 0 0 1 1742 16Z"></path>
          <path d="M1767.500 10.500V25.500" stroke="#686868" stroke-width="1"></path>
          <path d="M1788.300 22.300L1787.500 22L1783 24.500L1783.800 19.500L1780.500 16.200L1785.200 15.300L1787.500 10.800L1789.800 15.300H1795.500M1790.500 18.700H1795.500M1790.500 22H1795.500"></path>
          <g stroke="none">
            <circle cx="1824" cy="18" r="11.800" fill="#77716e"></circle>
            <path d="M1815 26.500L1818 21L1816 13L1822 8L1830 9L1831 19L1827 24L1824 29.500Q1818 30 1815 26.500Z" fill="#cfaa98"></path>
            <path d="M1816 26L1819 22L1826 24.500L1824 29.700Q1819 29.500 1816 26Z" fill="#7b4c3c"></path>
            <path d="M1813 18Q1811 10 1817 8Q1822 4 1829 8L1832 12L1831 16Q1829 10 1824 10Q1819 11 1819.500 16L1817 22L1815 20Z" fill="#17110f"></path>
            <path d="M1824 14.500H1827M1829 14.500H1831" stroke="#33231f" stroke-width="1"></path>
            <circle cx="1854.500" cy="18" r="1.400" fill="#fff"></circle><circle cx="1860" cy="18" r="1.400" fill="#fff"></circle><circle cx="1865.500" cy="18" r="1.400" fill="#fff"></circle>
            <defs>
              <linearGradient id="ca" x1="0" y1="0" x2="0" y2="1"><stop offset="0" stop-color="#168be8"></stop><stop offset=".5" stop-color="#31b79b"></stop><stop offset="1" stop-color="#f3d32a"></stop></linearGradient>
              <linearGradient id="cb" x1="0" y1="0" x2="0" y2="1"><stop offset="0" stop-color="#a050ee"></stop><stop offset=".5" stop-color="#ef6089"></stop><stop offset="1" stop-color="#ffad55"></stop></linearGradient>
            </defs>
            <path d="M1893 8H1901Q1903.500 8 1904.200 11L1905 13H1901Q1899 13 1898 16L1896.500 21Q1895.500 23.500 1893 23.500H1890Q1886 23 1887.500 18L1889.500 11Q1890.500 8 1893 8Z" fill="url(#ca)"></path>
            <path d="M1899 8H1901Q1903.500 8 1904.200 11L1905 13H1901Q1899.500 13 1899 14Z" fill="#1747bd"></path>
            <path d="M1903 13H1906Q1910 13.500 1908.500 18L1906.500 25Q1905.500 28 1903 28H1895Q1892.500 28 1892 25L1891.200 23.500H1894Q1896 23.500 1897 20.500L1899 15.500Q1900 13 1903 13Z" fill="url(#cb)"></path>
          </g>
        </svg>
      </div>
      <div class="page">
        <div class="header">
          <div class="bar">
            <svg width="48" height="48" viewBox="0 0 48 48">
              <rect width="48" height="48" fill="#000"></rect>
              <path d="M24 9L33 14V23L24 28.500L15.500 23V14Z" fill="#1c0c46" stroke="#173a6e" stroke-width="1"></path>
              <path d="M24 11.500L30.500 15V21L24 25L18 21V15Z" fill="#5a138b"></path>
              <path d="M18 15L24 18.500L30.500 15M24 12V18" stroke="#2c1260" stroke-width="1" fill="none"></path>
              <circle cx="24" cy="18.500" r="2.600" fill="#5a78d8"></circle><path d="M24 18V26.500" stroke="#43b4da" stroke-width="1.600"></path>
              <text class="brand" x="0.500" y="34.300" textLength="46.500" lengthAdjust="spacingAndGlyphs">FLOWLOGICROUTE</text>
            </svg>
            <h1 class="title">Route Results</h1>
            <button class="start">Start New Route</button>
          </div>
        </div>
        <div class="tabs"><div class="list"><div class="tab">Summary</div><div class="tab on">Map View</div></div></div>
        <div class="stage">
          <route-map class="canvas"></route-map>
          <div class="card overview">
            <div class="head">Route Overview<i class="fold"></i></div>
            <div class="stats">
              <div>Total Routes: <b>2</b></div><div>Total Stops: <b>5</b></div>
              <div>Total Miles: <b>153.5</b></div><div>Fuel Cost: <b>$491.20</b></div>
            </div>
            <div class="live"><i class="pulse"></i>Live Tracking Active</div>
          </div>
          <div class="card legend">
            <div class="head">Route Legend<i class="fold"></i></div>
            <div class="trucks">
              <div class="row"><i class="swatch"></i>${truck}<div><div class="name">Truck B</div><div class="sub">5 stops • Live tracking</div></div></div>
              <div class="row"><i class="swatch red"></i>${truck}<div><div class="name">Truck A</div><div class="sub">0 stops • Live tracking</div></div></div>
            </div>
          </div>
          <svg class="mark" viewBox="0 0 92 24">
            <circle cx="11.500" cy="13" r="9" fill="#d9dfd9" fill-opacity=".55" stroke="#898a82" stroke-width="3.200"></circle>
            <circle cx="11.500" cy="13" r="9" fill="none" stroke="#fff" stroke-width="2"></circle>
            <circle cx="12" cy="12.500" r="4.800" fill="#55757e"></circle>
            <path d="M12.500 9L13.500 11.500L16 12.500L13.500 13.500L12.500 16L11.500 13.500L9 12.500L11.500 11.500Z" fill="#fff"></path>
            <text x="24" y="17.500" textLength="62" lengthAdjust="spacingAndGlyphs">mapbox</text>
          </svg>
          <div class="layers">
            <svg width="16" height="16" viewBox="0 0 24 24" fill="none" stroke="#374151" stroke-width="2" stroke-linecap="round" stroke-linejoin="round"><path d="m12.830 2.180a2 2 0 0 0-1.660 0L2.600 6.080a1 1 0 0 0 0 1.830l8.580 3.910a2 2 0 0 0 1.660 0l8.580-3.900a1 1 0 0 0 0-1.830Z"></path><path d="m22 12.650-9.170 4.160a2 2 0 0 1-1.660 0L2 12.650"></path><path d="m22 17.650-9.170 4.160a2 2 0 0 1-1.660 0L2 17.650"></path></svg>
            Layers
          </div>
          <div class="credit"><span>© Mapbox</span><span>© OpenStreetMap</span><b>Improve this map</b></div>
        </div>
      </div>`;
  }
}
